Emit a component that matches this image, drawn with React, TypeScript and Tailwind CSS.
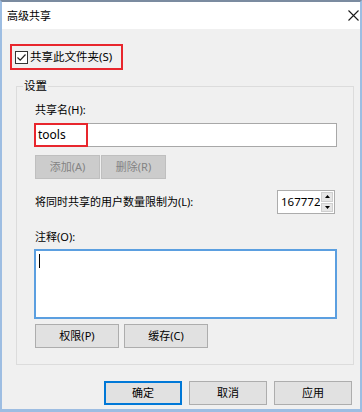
import React from "react";

const Btn = ({ children, className = "" }: { children: React.ReactNode; className?: string }) => (
  <div
    className={
      "h-[24px] flex items-center justify-center border border-[#adadad] bg-[#e1e1e1] text-black " + className
    }
  >
    {children}
  </div>
);

const DisabledBtn = ({ children }: { children: React.ReactNode }) => (
  <div className="w-[65px] h-[24px] flex items-center justify-center border border-[#bfbfbf] bg-[#cccccc] text-[#838383]">
    {children}
  </div>
);

export default function App() {
  return (
    <div className="w-[362px] h-[412px] flex flex-col bg-[#f0f0f0] border-x-2 border-b-[3px] border-[#9dbde2] border-t-2 border-t-[#7b8ba0] font-['Noto_Sans','Noto_Sans_CJK_SC',sans-serif] text-[11px] leading-[16px] text-black overflow-hidden">
      {/* title bar */}
      <div className="h-[27px] bg-white flex items-center justify-between pl-[5px] pr-[1px]">
        <span>高级共享</span>
        <svg width="11" height="11" viewBox="0 0 11 11">
          <path d="M0.5 0.5 L10.5 10.5 M10.5 0.5 L0.5 10.5" stroke="#1a1a1a" strokeWidth="1.1" />
        </svg>
      </div>

      {/* body */}
      <div className="flex-1 flex flex-col">
        {/* checkbox */}
        <div className="ml-[8px] mt-[15px] w-[113px] h-[26px] border-2 border-[#e8262d] flex items-center pl-[3px] gap-[2px]">
          <div className="w-[13px] h-[13px] border border-[#333333] bg-white flex items-center justify-center">
            <svg width="11" height="11" viewBox="0 0 11 11">
              <path d="M1.5 5.5 L4.2 8.2 L9.5 2.5" stroke="#222" strokeWidth="1.2" fill="none" />
            </svg>
          </div>
          <span className="text-[11.5px]">共享此文件夹(S)</span>
        </div>

        {/* group box */}
        <div className="relative ml-[14px] mt-[16px] w-[338px] h-[279px] border border-[#dcdcdc] flex flex-col pl-[17px] pr-[18px]">
          <span className="absolute left-[6px] top-[-9px] px-[1px] bg-[#f0f0f0] text-[11.5px]">设置</span>

          <div className="mt-[15px] pl-[1px]">共享名(H):</div>
          <div className="relative mt-[5px] w-[303px] h-[24px] border border-[#a8a8a8] bg-white flex items-center pl-[3px]">
            <span className="text-[12px]">tools</span>
            <div className="absolute left-[-1px] top-[-1px] w-[54px] h-[24px] border-2 border-[#e8262d]" />
          </div>

          <div className="mt-[8px] flex gap-[1px] pl-[1px]">
            <DisabledBtn>添加(A)</DisabledBtn>
            <DisabledBtn>删除(R)</DisabledBtn>
          </div>

          <div className="mt-[11px] flex items-center justify-between h-[24px]">
            <span className="pl-[1px]">将同时共享的用户数量限制为(L):</span>
            <div className="w-[58px] h-[24px] border border-[#acacac] bg-white flex">
              <div className="flex-1 flex items-center pl-[3px] text-[11.5px]">167772</div>
              <div className="w-[15px] flex flex-col gap-[1px] p-[1px] bg-white">
                <div className="flex-1 bg-[#e6e6e6] border border-[#cfcfcf] flex items-center justify-center">
                  <svg width="5" height="3" viewBox="0 0 5 3">
                    <path d="M0 3 L2.5 0 L5 3 Z" fill="#000" />
                  </svg>
                </div>
                <div className="flex-1 bg-[#e6e6e6] border border-[#cfcfcf] flex items-center justify-center">
                  <svg width="5" height="3" viewBox="0 0 5 3">
                    <path d="M0 0 L5 0 L2.5 3 Z" fill="#000" />
                  </svg>
                </div>
              </div>
            </div>
          </div>

          <div className="mt-[15px] pl-[1px]">注释(O):</div>
          <div className="mt-[4px] w-[303px] h-[70px] border-2 border-[#5b9fe0] bg-white pl-[3px] pt-[3px]">
            <div className="w-[1px] h-[14px] bg-black" />
          </div>

          <div className="mt-[5px] flex gap-[5px] pl-[1px]">
            <Btn className="w-[84px]">权限(P)</Btn>
            <Btn className="w-[84px]">缓存(C)</Btn>
          </div>
        </div>

        {/* dialog buttons */}
        <div className="mt-[16px] flex justify-end gap-[7px] mr-[8px]">
          <div className="w-[78px] h-[24px] flex items-center justify-center border-2 border-[#0078d7] bg-[#e1e1e1]">
            确定
          </div>
          <Btn className="w-[78px]">取消</Btn>
          <Btn className="w-[78px]">应用</Btn>
        </div>
      </div>
    </div>
  );
}
